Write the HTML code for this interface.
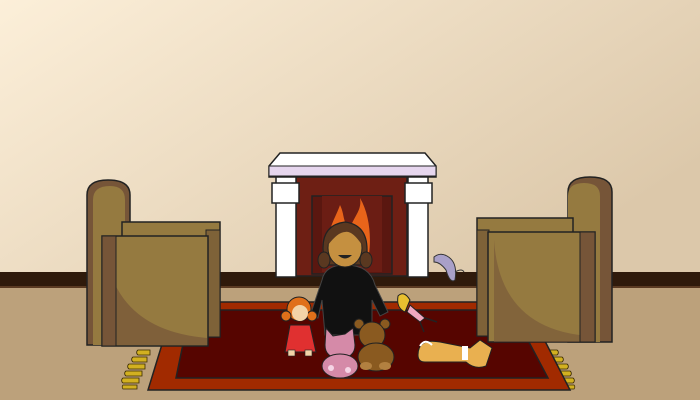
<!DOCTYPE html>
<html><head><style>html,body{margin:0;padding:0;width:700px;height:400px;overflow:hidden}</style></head><body>
<svg width="700" height="400" viewBox="0 0 700 400" xmlns="http://www.w3.org/2000/svg">
<defs>
<linearGradient id="wall" x1="0" y1="0" x2="1" y2="0.6">
<stop offset="0" stop-color="#fcefd9"/><stop offset="1" stop-color="#dcc8aa"/></linearGradient>
</defs>
<rect width="700" height="400" fill="#bca17b"/>
<rect width="700" height="274" fill="url(#wall)"/>
<rect y="272" width="700" height="16" fill="#2f1a0b"/>
<rect y="286" width="700" height="2" fill="#5a3a22"/>
<!-- fireplace -->
<rect x="296" y="176" width="111" height="100" fill="#6e1f14" stroke="#222" stroke-width="1.5"/>
<rect x="312" y="196" width="80" height="78" fill="#5a1710" stroke="#222" stroke-width="1.5"/>
<rect x="322" y="196" width="60" height="76" fill="#6b1d14"/>
<path d="M330 255 C325 230 335 220 340 205 C345 215 342 222 350 228 C355 215 362 210 360 198 C370 215 372 240 368 260Z" fill="#e8641a"/>
<path d="M336 258 C334 240 342 232 346 222 C350 232 356 236 360 245 C364 240 364 250 362 260Z" fill="#f5a030"/>
<path d="M269 166 L280 153 L425 153 L436 166 L436 177 L269 177Z" fill="#fff" stroke="#222" stroke-width="1.5"/>
<rect x="269" y="166" width="167" height="10" fill="#e6d6ee" stroke="#222" stroke-width="1"/>
<rect x="276" y="177" width="20" height="100" fill="#fff" stroke="#222" stroke-width="1.5"/>
<rect x="272" y="183" width="27" height="20" fill="#fff" stroke="#222" stroke-width="1.5"/>
<rect x="408" y="177" width="20" height="100" fill="#fff" stroke="#222" stroke-width="1.5"/>
<rect x="405" y="183" width="27" height="20" fill="#fff" stroke="#222" stroke-width="1.5"/>
<!-- rug -->
<g fill="#d2b020" stroke="#3a2a00" stroke-width="0.8">
<path d="M150 350 h-12 a3 3 0 0 0 0 5 h12Z M147 357 h-14 a3 3 0 0 0 0 5 h14Z M145 364 h-16 a3 3 0 0 0 0 5 h16Z M142 371 h-16 a3 3 0 0 0 0 5 h16Z M139 378 h-16 a3 3 0 0 0 0 5 h16Z M137 385 h-14 a3 3 0 0 0 0 4 h14Z"/>
<path d="M545 350 h12 a3 3 0 0 1 0 5 h-12Z M548 357 h14 a3 3 0 0 1 0 5 h-14Z M551 364 h16 a3 3 0 0 1 0 5 h-16Z M554 371 h16 a3 3 0 0 1 0 5 h-16Z M557 378 h16 a3 3 0 0 1 0 5 h-16Z M560 385 h14 a3 3 0 0 1 0 4 h-14Z"/>
</g>
<path d="M175 302 L525 302 L570 390 L148 390Z" fill="#a12a00" stroke="#222" stroke-width="1.5"/>
<path d="M190 310 L512 310 L548 378 L176 378Z" fill="#560500" stroke="#222" stroke-width="1.5"/>
<!-- left chair -->
<path d="M87 345 L87 195 Q87 180 108 180 Q130 180 130 195 L130 345Z" fill="#765538" stroke="#222" stroke-width="1.5"/>
<path d="M93 345 L93 200 Q93 186 110 186 Q125 186 125 200 L125 345Z" fill="#957a40"/>
<rect x="122" y="222" width="98" height="115" fill="#957a40" stroke="#222" stroke-width="1.5"/>
<rect x="206" y="230" width="14" height="107" fill="#7e6238" stroke="#222" stroke-width="1"/>
<rect x="102" y="236" width="106" height="110" fill="#957a40" stroke="#222" stroke-width="1.5"/>
<path d="M104 242 Q112 330 207 338 L207 345 L104 345Z" fill="#765538" opacity="0.7"/>
<rect x="102" y="236" width="14" height="110" fill="#765538" stroke="#222" stroke-width="1"/>
<!-- right chair -->
<path d="M568 342 L568 192 Q568 177 590 177 Q612 177 612 192 L612 342Z" fill="#765538" stroke="#222" stroke-width="1.5"/>
<path d="M568 342 L568 196 Q568 183 584 183 Q600 183 600 196 L600 342Z" fill="#957a40"/>
<rect x="477" y="218" width="96" height="118" fill="#957a40" stroke="#222" stroke-width="1.5"/>
<rect x="477" y="230" width="12" height="106" fill="#7e6238" stroke="#222" stroke-width="1"/>
<rect x="488" y="232" width="107" height="110" fill="#957a40" stroke="#222" stroke-width="1.5"/>
<path d="M494 240 Q500 330 590 336 L590 342 L494 342Z" fill="#765538" opacity="0.6"/>
<rect x="580" y="232" width="15" height="110" fill="#765538" stroke="#222" stroke-width="1"/>
<!-- mouse -->
<path d="M434 257 Q440 252 447 256 Q458 262 455 280 Q450 284 446 270 Q440 262 434 262Z" fill="#a9a0c8" stroke="#333" stroke-width="1"/>
<path d="M455 272 Q462 268 464 272" fill="none" stroke="#333"/>
<!-- girl -->
<path d="M322 280 Q325 265 345 265 Q370 265 375 285 L388 312 L380 316 L372 300 L372 335 L325 335 L322 300 L318 318 L310 316Z" fill="#111" stroke="#444" stroke-width="1"/>
<path d="M323 250 Q322 225 345 222 Q368 225 367 252 L365 265 L325 265Z" fill="#5a3820" stroke="#222" stroke-width="1.2"/>
<ellipse cx="345" cy="248" rx="17" ry="19" fill="#c59040" stroke="#222" stroke-width="1"/>
<path d="M328 245 Q330 225 345 225 Q360 225 362 245 Q352 230 345 232 Q338 232 328 245Z" fill="#5a3820"/>
<path d="M338 255 Q345 262 352 255Z" fill="#222"/>
<ellipse cx="324" cy="260" rx="6" ry="8" fill="#5a3820" stroke="#222"/>
<ellipse cx="366" cy="260" rx="6" ry="8" fill="#5a3820" stroke="#222"/>
<!-- red doll -->
<circle cx="299" cy="309" r="12" fill="#e0701a" stroke="#222"/>
<circle cx="286" cy="316" r="5" fill="#e0701a" stroke="#222"/>
<circle cx="312" cy="316" r="5" fill="#e0701a" stroke="#222"/>
<ellipse cx="300" cy="313" rx="8" ry="8" fill="#f2d4a8"/>
<path d="M290 325 L310 325 L316 352 L285 352Z" fill="#e03030" stroke="#222"/>
<rect x="288" y="350" width="7" height="6" fill="#f2d4a8" stroke="#222" stroke-width="0.6"/>
<rect x="305" y="350" width="7" height="6" fill="#f2d4a8" stroke="#222" stroke-width="0.6"/>
<!-- pink cat -->
<path d="M325 345 L326 328 L333 336 L345 334 L353 328 L355 345 Q355 358 340 358 Q325 358 325 345Z" fill="#d58aa8" stroke="#222"/>
<ellipse cx="340" cy="366" rx="18" ry="12" fill="#d58aa8" stroke="#222"/>
<circle cx="331" cy="368" r="3" fill="#f5d5e5"/><circle cx="348" cy="370" r="3" fill="#f5d5e5"/>
<!-- bear -->
<circle cx="359" cy="324" r="5" fill="#8a5a20" stroke="#222"/><circle cx="385" cy="324" r="5" fill="#8a5a20" stroke="#222"/>
<circle cx="372" cy="335" r="13" fill="#8a5a20" stroke="#222"/>
<ellipse cx="376" cy="357" rx="18" ry="14" fill="#8a5a20" stroke="#222"/>
<ellipse cx="366" cy="366" rx="6" ry="4" fill="#b28040"/><ellipse cx="385" cy="366" rx="6" ry="4" fill="#b28040"/>
<!-- blonde doll -->
<path d="M398 296 Q404 290 410 300 L405 312 Q396 308 398 296Z" fill="#e8c030" stroke="#222"/>
<path d="M410 305 L425 318 L420 322 L407 312Z" fill="#f0a8c0" stroke="#222"/>
<path d="M425 318 L437 322 M420 322 L424 332" stroke="#222" stroke-width="1.5"/>
<!-- dog -->
<path d="M418 355 Q418 338 440 342 L470 348 L480 340 L492 348 L486 366 Q475 370 466 362 L425 362 Q418 362 418 355Z" fill="#e9b050" stroke="#222"/>
<path d="M420 346 Q425 338 432 345" fill="none" stroke="#fff" stroke-width="2"/>
<rect x="462" y="346" width="6" height="14" fill="#fff"/>
</svg>
</body></html>
